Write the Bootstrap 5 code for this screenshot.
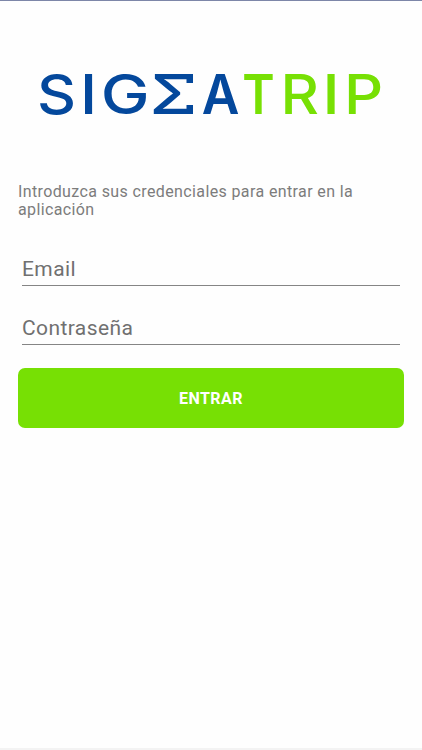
<!DOCTYPE html>
<html lang="es">
<head>
<meta charset="utf-8">
<meta name="viewport" content="width=device-width, initial-scale=1">
<title>SIGEA Trip</title>
<link href="https://cdn.jsdelivr.net/npm/bootstrap@5.3.0/dist/css/bootstrap.min.css" rel="stylesheet">
<style>
body{font-family:Roboto,sans-serif;background:#fefefe;letter-spacing:.38px}
.screen{height:750px;border-top:1px solid #7d86a8;border-bottom:2px solid #f3f3f3;padding:0 18px}
.brand{height:90px;margin:48px -18px 0}
.brand text{font-family:Inter,sans-serif;font-weight:600;font-size:54.5px;letter-spacing:0;text-anchor:middle}
.brand .round{font-weight:500}
.intro{margin:44px 0 0;font-size:16px;line-height:18px;color:#7c7c7c}
.fields{padding:0 4px;margin-top:33px}
.field-line{height:34px;border:0;border-bottom:1px solid #858585;border-radius:0;padding:1px 0 0;font-size:21px;line-height:32px;letter-spacing:.4px;background:transparent}
.field-line::placeholder{color:#707070;opacity:1}
.field-line+.field-line{margin-top:25px}
.btn-enter{height:60px;margin-top:23px;padding:8px 0 6px;background:#77e004;border:0;border-radius:7px;color:#fff;font-size:16px;font-weight:700;letter-spacing:.5px}
</style>
<script src="https://cdn.jsdelivr.net/npm/bootstrap@5.3.0/dist/js/bootstrap.bundle.min.js"></script>
</head>
<body>
<main class="screen d-flex flex-column overflow-hidden">
<svg class="brand flex-shrink-0" viewBox="0 49 422 90" role="img" aria-label="SIGEA TRIP">
<g fill="#04489c">
<text class="round" transform="translate(56.5 114) scale(1.11 1)">S</text>
<text transform="translate(88.500 114)">I</text>
<text class="round" transform="translate(125.200 114) scale(1.2 1)">G</text>
<text class="round" transform="translate(172.800 114) scale(1.22 1)">Σ</text>
<path d="M186.500 74h6.500v9h-6.500zM186.500 105h6.500v9h-6.500z"/>
<text transform="translate(220.700 114) scale(.95 1)">A</text>
</g>
<g fill="#77e004">
<text transform="translate(258.500 114) scale(.9 1)">T</text>
<text class="round" transform="translate(299.800 114) scale(1.09 1)">R</text>
<text transform="translate(331 114)">I</text>
<text class="round" transform="translate(363.700 114) scale(1.12 1)">P</text>
</g>
</svg>
<p class="intro">Introduzca sus credenciales para entrar en la aplicación</p>
<form class="d-flex flex-column">
<div class="fields d-flex flex-column">
<input class="form-control field-line shadow-none" type="email" placeholder="Email" aria-label="Email">
<input class="form-control field-line shadow-none" type="password" placeholder="Contraseña" aria-label="Contraseña">
</div>
<button class="btn btn-enter w-100" type="button">ENTRAR</button>
</form>
</main>
</body>
</html>
